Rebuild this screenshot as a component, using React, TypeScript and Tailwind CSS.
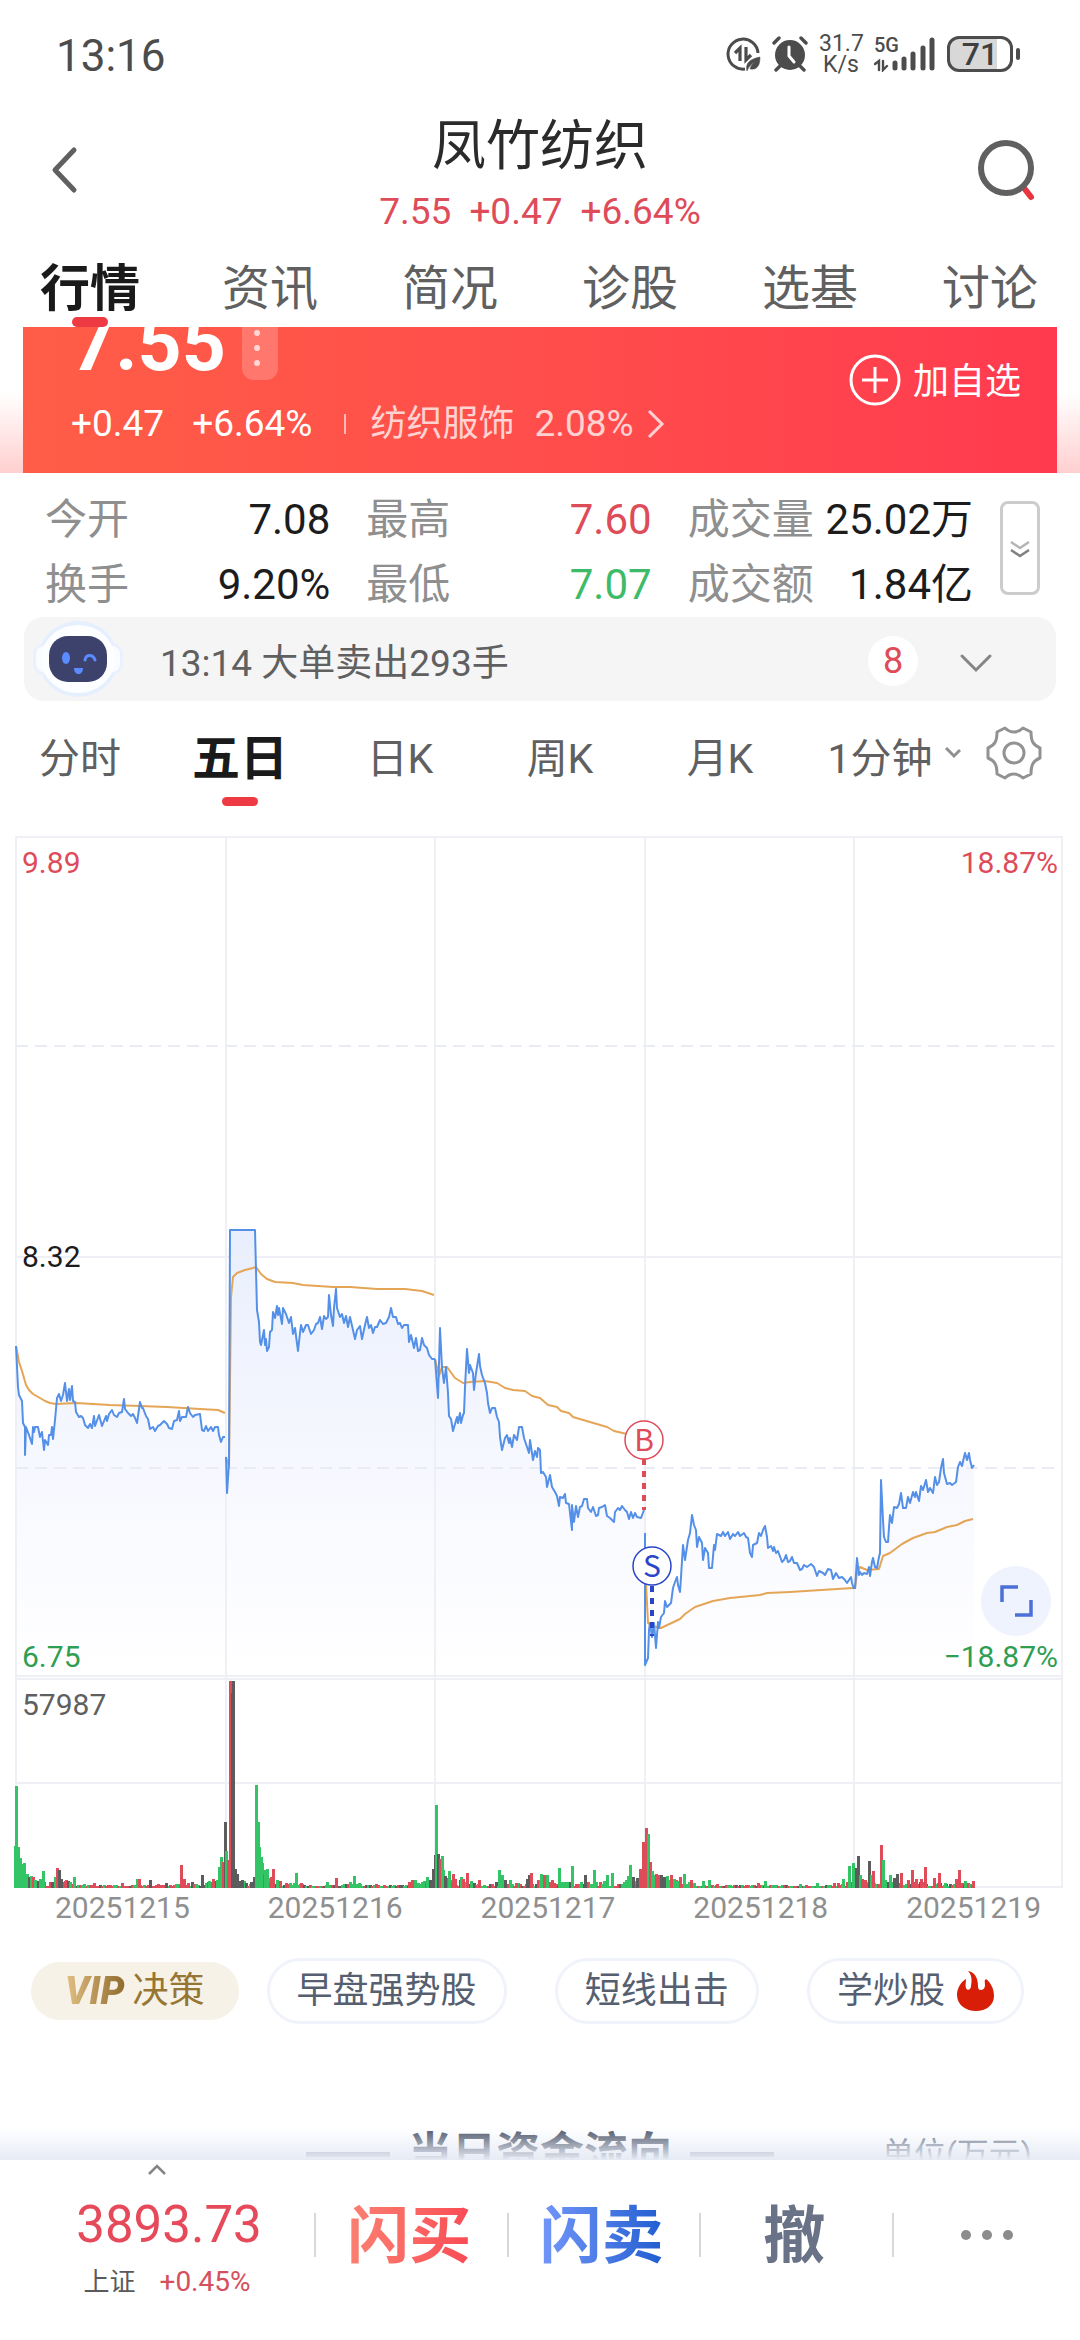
import { Fragment } from "react"

const RED = "#de4b59"
const GREEN = "#33c466"
const GRAY = "#5c5c5c"

const mainTabs = ["行情", "资讯", "简况", "诊股", "选基", "讨论"]
const periods = ["分时", "五日", "日K", "周K", "月K", "1分钟"]
const dates = ["20251215", "20251216", "20251217", "20251218", "20251219"]

const stats = [
  { label: "今开", value: "7.08", color: "text-[#1c1c1c]" },
  { label: "最高", value: "7.60", color: "text-[#de4b59]" },
  { label: "成交量", value: "25.02万", color: "text-[#1c1c1c]" },
  { label: "换手", value: "9.20%", color: "text-[#1c1c1c]" },
  { label: "最低", value: "7.07", color: "text-[#3dbb68]" },
  { label: "成交额", value: "1.84亿", color: "text-[#1c1c1c]" },
]

// price line, one string per trading day
const priceDays = [
  "16,510 18,551 19,559 22,565 23,587 25,591 25,619 26,591 29,599 32,608 33,591 34,596 35,591 38,591 40,601 42,596 44,614 45,604 48,609 49,599 51,599 52,591 53,603 55,584 57,562 59,558 61,565 63,559 65,547 67,565 69,553 70,564 72,550 73,565 75,566 76,576 79,581 81,580 83,582 85,589 88,592 90,588 92,592 94,580 95,590 99,579 102,590 106,580 107,585 109,578 112,574 114,579 117,581 119,577 122,576 124,563 125,573 128,577 131,580 133,578 135,582 137,587 140,566 142,572 143,572 146,580 148,583 150,593 153,591 155,595 158,590 160,589 164,585 167,588 169,592 172,593 174,585 177,584 179,575 180,585 182,581 186,581 188,571 190,577 193,581 195,579 200,578 202,594 204,595 206,590 208,595 211,591 213,595 215,591 218,591 219,599 221,606 223,601 225,601",
  "226,621 227,657 229,627 230,394 255,394 257,474 259,486 260,506 261,509 263,499 264,494 265,509 266,503 267,515 269,511 270,496 272,494 273,476 275,482 277,470 278,479 279,472 282,488 283,472 286,478 289,487 291,481 293,498 295,492 298,515 300,497 301,489 303,496 306,489 308,489 311,498 314,494 316,488 318,487 320,481 322,493 324,480 326,483 328,481 329,459 331,479 333,490 334,472 336,453 337,472 340,481 342,478 344,487 346,480 348,491 350,481 353,494 355,503 357,494 360,490 362,503 365,489 367,481 369,492 371,489 373,497 375,491 377,491 380,484 383,488 386,487 389,481 391,472 393,481 396,481 398,488 400,487 402,492 404,489 408,489 409,506 411,499 414,512 416,502 418,515 420,514 422,502 424,509 427,512 429,519 432,523 435,523",
  "435,523 438,562 440,492 442,532 444,547 446,531 448,557 449,580 451,583 453,595 455,588 457,581 458,587 460,577 461,587 463,579 464,577 465,551 467,513 469,537 470,529 473,537 474,554 476,537 479,518 480,530 482,539 485,547 487,557 488,567 490,577 492,572 495,572 497,581 499,586 500,601 502,614 505,602 507,599 509,607 510,602 512,611 514,599 517,604 519,591 522,591 524,602 527,611 529,617 530,604 533,624 535,615 537,621 538,612 540,614 541,637 543,636 546,641 547,651 550,639 552,651 555,656 557,660 559,670 560,661 563,662 565,658 566,667 569,668 572,694 572,669 574,686 576,670 578,681 580,671 582,670 584,663 587,663 588,672 591,676 593,671 596,680 598,679 599,672 602,671 605,669 607,680 610,682 614,686 615,676 618,672 620,674 622,670 625,674 627,676 629,683 631,676 633,682 635,677 637,681 641,682 644,674",
  "645,697 645,829 648,822 649,794 650,787 652,801 654,787 656,812 658,786 659,792 661,781 664,777 665,765 667,771 671,767 673,752 675,746 677,741 678,749 680,756 681,741 683,709 685,724 688,704 690,697 692,679 694,689 696,694 697,711 699,701 702,707 703,724 705,712 708,717 709,732 712,732 714,709 715,714 717,698 721,700 723,696 725,700 728,696 730,703 733,698 735,700 738,696 740,700 744,697 746,701 748,702 750,717 752,721 753,709 757,707 759,697 761,700 763,694 765,690 767,701 768,712 771,710 773,715 774,711 776,717 778,715 782,726 784,724 786,719 788,726 790,725 792,721 794,727 797,727 800,734 802,733 804,729 807,731 811,728 814,731 815,734 817,740 819,735 823,737 825,739 828,733 831,734 833,743 836,737 839,742 842,741 845,744 847,747 851,741 852,747 854,753",
  "855,753 857,722 859,739 860,736 862,739 864,737 867,738 869,731 870,740 872,726 873,722 875,731 877,732 879,721 880,717 881,644 883,684 884,701 886,706 888,706 889,691 890,679 892,687 894,671 897,672 899,668 901,657 903,672 906,672 908,661 910,667 913,656 915,661 916,656 919,665 921,650 923,654 926,644 928,656 930,652 933,657 935,641 937,649 939,646 941,632 943,623 944,637 947,648 950,647 952,649 956,646 958,631 960,626 962,630 964,621 965,617 967,624 969,617 970,624 972,632 974,629",
]

// average price line
const averageDays = [
  "16,510 19,526 22,535 26,549 29,554 33,558 40,562 45,565 50,567 56,568 76,567 110,569 140,570 167,571 200,573 218,574 225,577",
  "226,621 229,631 231,461 233,441 237,437 245,434 253,432 256,431 261,438 267,443 275,446 293,447 303,449 333,451 350,451 377,453 405,453 422,455 434,459",
  "435,523 439,540 442,531 447,531 455,542 463,547 470,546 485,545 497,547 505,552 513,554 525,555 532,560 540,562 548,569 557,571 561,575 569,577 573,581 590,586 607,591 614,595 627,598 644,602",
  "645,720 646,747 648,787 652,790 661,792 680,783 685,778 695,771 713,765 730,762 760,759 767,757 790,756 853,752",
  "855,752 857,737 860,731 867,734 879,733 883,720 890,717 902,708 913,702 927,697 935,696 947,691 957,689 965,685 973,683",
]

// volume peaks: x, height, colour (r = up, g = down, k = flat)
const peaks =
  "15,42,g 16,102,g 18,41,g 20,30,g 22,24,g 24,25,g 27,14,g 29,11,k 31,12,g 33,11,r 35,8,g 38,7,k 40,9,g 43,17,g 52,6,k 55,11,g 57,20,r 59,18,k 61,9,k 65,7,r 70,6,g 74,11,g 84,4,g 94,5,r 122,5,r 137,9,g 139,9,r 150,8,k 158,4,r 166,5,k 181,23,r 184,9,r 188,5,r 202,13,k 209,7,g 213,9,r 217,8,g 219,21,g 221,31,g 223,26,r 225,66,k 226,37,g 228,28,r 230,207,r 232,195,k 233,207,k 235,19,k 237,14,k 239,7,k 242,8,k 251,6,k 254,11,k 256,103,g 258,66,g 259,41,g 261,31,g 262,25,g 264,14,r 265,18,g 267,19,g 271,11,r 273,19,r 277,8,g 280,7,r 296,15,g 301,5,r 327,6,g 336,10,r 350,6,g 354,12,g 359,5,g 376,4,r 409,6,r 412,8,r 415,8,g 422,6,g 427,11,g 430,8,k 433,19,k 435,33,k 436,83,g 438,34,k 440,29,r 442,32,g 443,18,g 445,12,k 449,17,g 453,14,r 455,9,r 461,11,g 463,9,r 467,15,r 471,7,g 479,8,r 499,18,g 502,13,g 505,8,k 510,8,g 516,5,r 527,9,k 529,13,k 531,15,r 541,14,g 544,13,r 547,13,g 559,20,g 572,22,g 581,6,g 585,13,k 594,18,g 604,6,g 607,13,g 612,15,g 626,8,g 628,12,g 630,23,g 633,11,k 637,10,k 640,19,r 643,46,r 646,60,r 648,54,g 650,26,r 652,17,g 654,13,g 656,14,r 659,13,r 661,13,k 664,11,k 667,12,g 671,13,r 674,9,g 677,7,g 680,11,r 684,14,g 689,6,g 691,8,r 694,5,g 703,7,g 709,8,g 717,4,r 758,5,r 765,7,g 800,4,g 817,5,g 834,5,r 843,9,g 847,6,r 849,22,g 853,25,g 856,20,k 858,32,k 860,13,g 862,9,r 865,8,r 869,27,k 871,13,g 873,17,r 881,43,r 883,28,g 885,8,g 890,13,g 894,10,k 897,14,k 901,15,r 908,8,r 912,18,r 916,9,r 921,9,r 925,21,r 934,10,r 939,15,r 945,5,g 956,9,r 959,18,r 965,7,g 973,7,r"
    .split(" ")
    .map((item) => {
      const [x, h, c] = item.split(",")
      return { x: Number(x), h: Number(h), c }
    })

const barColor: Record<string, string> = { r: RED, g: GREEN, k: GRAY }

// quiet minutes between the peaks
const quietBars = Array.from({ length: 479 }, (_, i) => {
  const x = 16 + i * 2
  const near = peaks.filter((p) => Math.abs(p.x - x) < 12 && p.h > 10 && p.h < 100).length
  const noise = (i * 7919 + ((i * i) % 31) * 17) % 13
  return { x, h: 2 + (noise % 2) + (near ? noise % (2 + near) : 0), c: "rgkgr"[(i * 3 + noise) % 5] }
})

function areaPoints(points: string) {
  const list = points.split(" ")
  const first = list[0].split(",")[0]
  const last = list[list.length - 1].split(",")[0]
  return `${first},840 ${points} ${last},840`
}

function StatusBar() {
  return (
    <div className="flex h-27 items-center justify-between pl-14 pr-15 text-[#4c4c4c]">
      <span className="pt-1 text-[44px] leading-none">13:16</span>
      <div className="flex items-center gap-[11px]">
        <svg className="h-9 w-9" viewBox="0 0 36 36" fill="none" stroke="currentColor" strokeWidth="3">
          <path d="M20 33A15 15 0 1 1 33 17" />
          <path d="M15 25V12l-5 5" strokeWidth="3.2" />
          <path d="M21 11v13l5-5" strokeWidth="3.2" />
          <path d="M22 35c-2-8 3-12 13-14 0 9-3 13-10 12 1-4 3-6 6-8-4 2-7 5-9 10z" fill="currentColor" strokeWidth="0.5" />
        </svg>
        <svg className="h-9 w-9" viewBox="0 0 36 36" fill="none" stroke="currentColor" strokeWidth="3.4" strokeLinecap="round">
          <circle cx="18" cy="19" r="15" fill="currentColor" stroke="none" />
          <path d="M2 7l5-5M34 7l-5-5M8 30l-4 4M28 30l4 4" />
          <path d="M17 11v9l5 6" stroke="#fff" strokeWidth="3" />
        </svg>
        <span className="w-11 text-center text-[23px] leading-[21px]">
          31.7
          <br />
          K/s
        </span>
        <div className="relative h-9 w-[62px]">
          <span className="absolute left-0 top-0 text-[20px] font-medium leading-[18px]">5G</span>
          <svg className="h-9 w-[62px]" viewBox="0 0 62 36" fill="none" stroke="currentColor" strokeLinecap="round">
            <path d="M21 32v-5M30 32v-9M39 32v-14M49 32v-20M58 32V4" strokeWidth="5" />
            <path d="M1 28l4-3v9M9 25v9l4-4" strokeWidth="2.4" />
          </svg>
        </div>
        <div className="flex items-center gap-[3px]">
          <div className="h-9 w-[66px] rounded-xl border-[3px] border-[#4c4c4c] bg-linear-to-r from-[#d8d8d8] from-78% to-white to-78% text-center text-[32px] font-medium leading-[31px] text-[#3f3f3f]">
            71
          </div>
          <div className="h-3 w-[4px] rounded-full bg-[#4c4c4c]" />
        </div>
      </div>
    </div>
  )
}

function Header() {
  return (
    <header className="flex h-[143px] items-center justify-between px-12">
      <button aria-label="返回" className="w-16 pb-5">
        <svg className="h-12 w-8" viewBox="0 0 32 48" fill="none" stroke="#606060" strokeWidth="5" strokeLinecap="round" strokeLinejoin="round">
          <path d="M26 4L7 24l19 20" />
        </svg>
      </button>
      <div className="flex flex-col items-center pb-3">
        <h1 className="text-[54px] leading-[76px] text-[#2b2b2b]">凤竹纺织</h1>
        <p className="flex gap-[18px] text-[37px] leading-[54px] text-[#de4b59]">
          <span>7.55</span>
          <span>+0.47</span>
          <span>+6.64%</span>
        </p>
      </div>
      <button aria-label="搜索" className="flex w-16 justify-end pb-5">
        <svg className="-mr-1 h-[62px] w-[60px]" viewBox="0 0 60 62" fill="none" strokeWidth="6" strokeLinecap="round">
          <path d="M48 49l7 9" stroke="#e8363f" />
          <circle cx="30" cy="29" r="25" stroke="#606060" />
        </svg>
      </button>
    </header>
  )
}

function QuoteCard() {
  return (
    <div className="bg-linear-to-b from-white from-45% to-[#ffcfcf] px-[23px]">
      <div className="flex h-[146px] justify-between overflow-hidden bg-linear-to-r from-[#ff5d47] to-[#ff3a4f] pl-12 pr-9 text-white">
        <div className="flex flex-col justify-end pb-[29px]">
          <div className="flex shrink-0 items-center gap-4 pb-6">
            <span className="text-[77px] font-bold leading-[72px]">7.55</span>
            <button aria-label="更多" className="flex h-18 w-9 flex-col items-center justify-end gap-[9px] rounded-xl bg-white/20 pr-[6px] pb-[14px]">
              <i className="h-[6px] w-[6px] rounded-full bg-white/70" />
              <i className="h-[6px] w-[6px] rounded-full bg-white/70" />
              <i className="h-[6px] w-[6px] rounded-full bg-white/70" />
            </button>
          </div>
          <div className="flex shrink-0 items-center text-[37px] leading-10">
            <span>+0.47</span>
            <span className="pl-7">+6.64%</span>
            <span className="ml-8 h-5 w-[2px] bg-white/60" />
            <a href="#sector" className="flex items-center pl-6 text-[36px] text-white/75">
              纺织服饰
              <span className="pl-5 text-[37px]">2.08%</span>
              <svg className="ml-3 h-8 w-5" viewBox="0 0 20 32" fill="none" stroke="currentColor" strokeWidth="3">
                <path d="M3 3l13 13L3 29" />
              </svg>
            </a>
          </div>
        </div>
        <button className="flex h-[106px] items-center gap-3 text-[36px] leading-10">
          <svg className="h-[52px] w-[52px]" viewBox="0 0 52 52" fill="none" stroke="currentColor" strokeWidth="3">
            <circle cx="26" cy="26" r="24" />
            <path d="M26 13v26M13 26h26" />
          </svg>
          <span className="pt-1">加自选</span>
        </button>
      </div>
    </div>
  )
}

function Stats() {
  return (
    <section className="flex items-start pl-[45px] pr-10">
      <dl className="grid flex-1 grid-cols-3 gap-x-9 pt-[14px]">
        {stats.map((s) => (
          <div key={s.label} className="flex justify-between text-[42px] leading-[65px]">
            <dt className="text-[#8f8f8f]">{s.label}</dt>
            <dd className={s.color}>{s.value}</dd>
          </div>
        ))}
      </dl>
      <button aria-label="展开" className="ml-[27px] mt-7 flex h-[94px] w-10 items-center justify-center rounded-lg border-[3px] border-[#cccccc]">
        <svg className="h-5 w-5" viewBox="0 0 20 20" fill="none" strokeWidth="2.5">
          <path d="M1 4l9 6 9-6" stroke="#b5b5b5" />
          <path d="M1 12l9 6 9-6" stroke="#808080" />
        </svg>
      </button>
    </section>
  )
}

function Robot() {
  return (
    <svg className="h-20 w-[92px]" viewBox="0 0 92 80">
      <ellipse cx="46" cy="40" rx="40" ry="38" fill="#e6effe" />
      <rect x="1" y="23" width="90" height="34" rx="14" fill="#e9f1fe" />
      <rect x="4" y="27" width="84" height="26" rx="8" fill="#fbfcff" />
      <ellipse cx="46" cy="40" rx="37" ry="34" fill="#fdfeff" />
      <rect x="17" y="17" width="58" height="46" rx="19" fill="#3d426c" />
      <ellipse cx="34" cy="39" rx="4" ry="6" fill="#5b8cff" />
      <path d="M53 41c1-6 8-6 10 0" fill="none" stroke="#5b8cff" strokeWidth="3" strokeLinecap="round" />
      <path d="M42 49h9c0 8-9 8-9 0z" fill="#5b8cff" />
    </svg>
  )
}

function PriceChart() {
  return (
    <svg className="block w-full text-[30px]" viewBox="0 0 1080 1054" role="img" aria-label="五日走势">
      <defs>
        <linearGradient id="area" gradientUnits="userSpaceOnUse" x1="0" y1="390" x2="0" y2="840">
          <stop offset="0" stopColor="#e7eefd" />
          <stop offset="0.3" stopColor="#f1f4fe" />
          <stop offset="0.6" stopColor="#f8f9ff" />
          <stop offset="1" stopColor="#ffffff" />
        </linearGradient>
      </defs>
      {priceDays.map((d) => (
        <polygon key={d} points={areaPoints(d)} fill="url(#area)" />
      ))}
      <g stroke="#eff0f5" strokeWidth="2" fill="none">
        <path d="M16 1H1063M16 421H1063M16 840H1063M16 843H1063M16 947H1063M16 1051H1063" />
        <path d="M16 0V1052M226 0V1052M435 0V1052M645 0V1052M854 0V1052M1062 0V1052" />
        <path d="M16 210H1063M16 632H1063" strokeDasharray="12 7" stroke="#e9edf3" />
      </g>
      <g fill="none" strokeWidth="2" strokeLinejoin="round">
        {averageDays.map((d) => (
          <polyline key={d} points={d} stroke="#e5a557" />
        ))}
        {priceDays.map((d) => (
          <polyline key={d} points={d} stroke="#5590e8" />
        ))}
      </g>

      {/* volume */}
      {[...quietBars, ...peaks].map((b, i) => (
        <rect key={i} x={b.x - 1} y={1052 - b.h} width="3" height={b.h} fill={barColor[b.c]} />
      ))}

      {/* buy and sell marks */}
      <g fontFamily="Noto Sans CJK SC, sans-serif" textAnchor="middle" fontSize="30">
        <path d="M644 623V674" stroke={RED} strokeWidth="4" strokeDasharray="6 6" />
        <circle cx="644" cy="604" r="19" fill="#fff" stroke={RED} strokeWidth="1.5" />
        <text x="644" y="615" fill={RED}>B</text>
        <path d="M652 750V800" stroke="#2b45c8" strokeWidth="4" strokeDasharray="6 6" />
        <circle cx="652" cy="730" r="19" fill="#fff" stroke="#2b45c8" strokeWidth="1.5" />
        <text x="652" y="741" fill="#2b45c8">S</text>
      </g>

      <circle cx="1016" cy="765" r="35" fill="#eff3fd" />
      <path d="M1002 766V751H1018M1015 779H1031V764" fill="none" stroke="#4c70d8" strokeWidth="3.5" />

      <text x="22" y="37" fill={RED}>9.89</text>
      <text x="1058" y="37" fill={RED} textAnchor="end">18.87%</text>
      <text x="22" y="431" fill="#1c1c1c">8.32</text>
      <text x="22" y="831" fill="#2f9e52">6.75</text>
      <text x="1058" y="831" fill="#2f9e52" textAnchor="end">−18.87%</text>
      <text x="22" y="879" fill="#5f5f5f">57987</text>
    </svg>
  )
}

function Pills() {
  return (
    <div className="flex items-center pl-[31px] pr-14 pt-8 text-[36px] leading-none text-[#565f70]">
      <button className="flex h-[58px] items-center gap-1 rounded-full bg-[#f7f2e7] px-[34px] text-[#977634]">
        <span className="bg-linear-to-r from-[#e3c083] to-[#8a6726] bg-clip-text pr-1 text-[38px] font-black italic text-transparent">VIP</span>
        决策
      </button>
      <div className="flex flex-1 justify-between pl-7">
        <button className="h-[66px] rounded-full border-[3px] border-[#f0f4fa] px-[27px]">早盘强势股</button>
        <button className="h-[66px] rounded-full border-[3px] border-[#f0f4fa] px-[27px]">短线出击</button>
        <button className="flex h-[66px] items-center gap-3 rounded-full border-[3px] border-[#f0f4fa] px-[27px]">
          学炒股
          <svg className="h-10 w-[37px]" viewBox="0 0 37 40">
            <path
              d="M11 0c6 1 10 6 10 15 0 3 1 4 3 4 3 0 4-3 4-5 0-3-1-5 1-6 5 4 8 10 8 17C37 34 29 40 19 40S0 34 0 24C0 17 4 11 9 8c0 4-1 7 0 9 1 3 5 2 5-2C15 9 15 4 11 0z"
              fill="#d81e06"
            />
          </svg>
        </button>
      </div>
    </div>
  )
}

function FlowHeading() {
  return (
    <div className="relative mt-25 flex-1 overflow-hidden">
      <div className="grid grid-cols-[1fr_auto_1fr] items-center pt-2 text-[#4d5568]">
        <span />
        <h2 className="flex items-center gap-[18px] text-[44px] font-bold leading-[44px]">
          <i className="h-[5px] w-21 bg-[#8b93a4]" />
          当日资金流向
          <i className="h-[5px] w-21 bg-[#8b93a4]" />
        </h2>
        <span className="pr-12 text-right text-[32px] leading-[44px] text-[#70788a]">单位(万元)</span>
      </div>
      <div className="absolute inset-x-0 bottom-0 h-8 bg-linear-to-b from-[#e6ebf5]/0 to-[#e6ebf5]" />
    </div>
  )
}

const actions = [
  { label: "闪买", style: "bg-linear-to-r from-[#fb8072] to-[#f94a55] bg-clip-text text-transparent" },
  { label: "闪卖", style: "bg-linear-to-r from-[#7397fa] to-[#1f5dd0] bg-clip-text text-transparent" },
  { label: "撤", style: "text-[#697286]" },
]

function BottomBar() {
  return (
    <footer className="flex h-45 bg-white">
      <button className="flex w-[314px] flex-col items-center pt-1">
        <svg className="h-3 w-5" viewBox="0 0 20 12" fill="none" stroke="#858585" strokeWidth="2.5">
          <path d="M2 10l8-8 8 8" />
        </svg>
        <span className="pl-6 pt-[17px] text-[51px] leading-[64px] text-[#e5495a]">3893.73</span>
        <span className="flex items-center gap-6 pl-5 leading-[50px]">
          <span className="text-[26px] text-[#5a5a5a]">上证</span>
          <span className="text-[28px] text-[#d4505e]">+0.45%</span>
        </span>
      </button>
      <div className="flex h-[150px] flex-1 items-center">
        {actions.map((a) => (
          <Fragment key={a.label}>
            <i className="h-11 w-[2px] bg-[#d8d8d8]" />
            <button className="flex-1 pt-1 pr-1 text-[62px] font-bold leading-[72px]">
              <span className={a.style}>{a.label}</span>
            </button>
          </Fragment>
        ))}
        <i className="h-11 w-[2px] bg-[#d8d8d8]" />
        <button aria-label="更多" className="flex flex-1 justify-center gap-[11px]">
          <i className="h-[10px] w-[10px] rounded-full bg-[#8c8c8c]" />
          <i className="h-[10px] w-[10px] rounded-full bg-[#8c8c8c]" />
          <i className="h-[10px] w-[10px] rounded-full bg-[#8c8c8c]" />
        </button>
      </div>
    </footer>
  )
}

export default function App() {
  return (
    <div className="flex h-screen flex-col overflow-hidden bg-white font-['Roboto','Noto_Sans_CJK_SC',sans-serif]">
      <StatusBar />
      <Header />

      {/* Main tabs */}
      <nav className="relative z-10 grid h-[76px] grid-cols-6">
        {mainTabs.map((tab, i) => (
          <button key={tab} className="flex flex-col items-center justify-between pt-[2px]">
            <span className={i === 0 ? "text-[50px] font-bold leading-[72px] text-[#1a1a1a]" : "text-[48px] leading-[72px] text-[#606060]"}>
              {tab}
            </span>
            {i === 0 && <i className="-mt-2 h-[10px] w-9 shrink-0 rounded-full bg-[#ee3a42]" />}
          </button>
        ))}
      </nav>

      <main className="flex min-h-0 flex-1 flex-col">
        <QuoteCard />
        <Stats />

        {/* Big order notice */}
        <div className="mx-6 flex h-[84px] items-center rounded-[20px] bg-[#f5f5f6] pl-2 text-[36px] leading-none text-[#606060]">
          <Robot />
          <p className="flex-1 pl-9 pt-2 text-[37px]">13:14 大单卖出293手</p>
          <span className="mt-1 flex h-[50px] w-[50px] items-center justify-center rounded-full bg-white text-[#de4b59]">8</span>
          <button aria-label="展开消息" className="pl-10 pr-[62px] pt-2">
            <svg className="h-5 w-9" viewBox="0 0 36 20" fill="none" stroke="#858585" strokeWidth="3" strokeLinecap="round">
              <path d="M4 3l14 14L32 3" />
            </svg>
          </button>
        </div>

        {/* Chart periods */}
        <div className="flex h-[135px] items-start pt-6">
          <div className="grid flex-1 grid-cols-6">
            {periods.map((p, i) => (
              <button key={p} className="flex flex-col items-center">
                <span
                  className={
                    i === 1
                      ? "text-[48px] font-bold leading-[68px] text-[#1a1a1a]"
                      : "flex items-center gap-3 text-[41px] leading-[68px] text-[#606060]"
                  }
                >
                  {p}
                  {i === 5 && (
                    <svg className="-mr-7 mb-3 h-3 w-4" viewBox="0 0 16 12" fill="none" stroke="#909090" strokeWidth="3">
                      <path d="M1 1l8 8 6-6" />
                    </svg>
                  )}
                </span>
                {i === 1 && <i className="mt-1 h-[9px] w-9 rounded-full bg-[#ee3a42]" />}
              </button>
            ))}
          </div>
          <button aria-label="设置" className="flex h-14 w-30 items-center justify-center pr-3">
            <svg className="h-[54px] w-[56px]" viewBox="0 0 56 54" fill="none" stroke="#929292" strokeWidth="3" strokeLinejoin="round">
              <path d="M19 2c3 3 5 4 9 4s6-1 9-4l8 4c0 9 2 13 9 16v10c-7 3-9 7-9 16l-8 4c-3-3-5-4-9-4s-6 1-9 4l-8-4c0-9-2-13-9-16V22c7-3 9-7 9-16z" />
              <circle cx="28" cy="27" r="10" />
            </svg>
          </button>
        </div>

        <PriceChart />
        <div className="grid grid-cols-5 pl-4 text-center text-[30px] leading-9 text-[#8f8f8f]">
          {dates.map((d) => (
            <span key={d}>{d}</span>
          ))}
        </div>

        <Pills />
        <FlowHeading />
      </main>

      <BottomBar />
    </div>
  )
}
